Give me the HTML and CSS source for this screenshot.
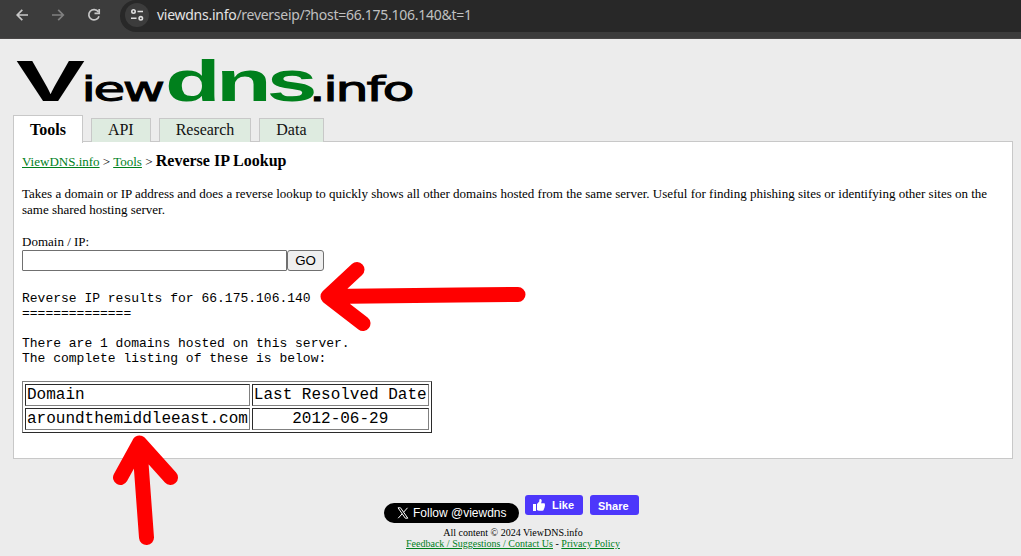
FILE: index.html
```html
<!DOCTYPE html>
<html lang="en">
<head>
<meta charset="utf-8">
<title>Reverse IP Lookup - ViewDNS.info</title>
<link rel="stylesheet" href="styles.css">
</head>
<body>
<header class="toolbar">
  <svg class="nav" width="120" height="32" viewBox="0 0 120 32" fill="none" stroke-width="1.7">
    <path stroke="#c7c7c7" d="M28 15H17.5M22.3 9.8L17.2 15L22.3 20.2"/>
    <path stroke="#808080" d="M52 15H63M58.200 9.800L63.300 15L58.200 20.200"/>
    <path stroke="#c7c7c7" d="M98.300 11.800A5.200 5.200 0 1 0 99 16.200M99.200 9V13.300H94.500"/>
  </svg>
  <div class="address">
    <span class="site-info">
      <svg width="14" height="14" viewBox="0 0 14 14" fill="none" stroke="#dedede" stroke-width="1.6">
        <circle cx="3.500" cy="3.500" r="1.700"/><path d="M7.500 3.500H13M1 10.300H6.500"/><circle cx="10.800" cy="10.300" r="1.700"/>
      </svg>
    </span>
    <span class="url"><b>viewdns.info</b>/reverseip/?host=66.175.106.140&amp;t=1</span>
  </div>
</header>
<main class="page">
  <svg class="logo" width="420" height="60" viewBox="0 0 420 60">
    <text class="v" x="16" y="55" font-size="58" textLength="69" lengthAdjust="spacingAndGlyphs">V</text>
    <text class="thin" transform="translate(81.500 55) scale(1.520 1)" font-size="34" letter-spacing="-1.6">iew</text>
    <text class="dns" transform="translate(165 55) scale(1.600 1)" font-size="57" letter-spacing="-3">dns</text>
    <text class="thin" transform="translate(309 55) scale(1.540 1)" font-size="34" letter-spacing="-1.500">.info</text>
  </svg>
  <nav class="tabs">
    <a class="tab active">Tools</a><a class="tab">API</a><a class="tab">Research</a><a class="tab">Data</a>
  </nav>
  <section class="panel">
    <div class="crumbs"><a href="#">ViewDNS.info</a> &gt; <a href="#">Tools</a> &gt; <strong>Reverse IP Lookup</strong></div>
    <p class="intro">Takes a domain or IP address and does a reverse lookup to quickly shows all other domains hosted from the same server. Useful for finding phishing sites or identifying other sites on the same shared hosting server.</p>
    <form class="lookup">
      <label for="host">Domain / IP:</label>
      <div class="row"><input id="host" type="text"><button type="button">GO</button></div>
    </form>
    <pre class="results">Reverse IP results for 66.175.106.140
==============

There are 1 domains hosted on this server.
The complete listing of these is below:</pre>
    <table class="listing">
      <tr><td>Domain</td><td>Last Resolved Date</td></tr>
      <tr><td>aroundthemiddleeast.com</td><td class="date">2012-06-29</td></tr>
    </table>
  </section>
  <footer class="footer">
    <div class="social">
      <span class="follow">
        <svg width="12" height="12" viewBox="0 0 12 12" fill="none" stroke="#fff"><path d="M1 .8H3.500L10.800 11.200H8.300ZM10.500 .8L6.600 5.200M5.200 6.800L1.200 11.200"/></svg>
        Follow @viewdns
      </span>
      <span class="fb like">
        <svg width="14" height="14" viewBox="0 0 14 14" fill="#fff"><path d="M1 6H4V13H1ZM5 6L7.300 3.500V1.500Q8.700 .2 9.600 2Q9.900 3.200 9 5.200H12Q13.400 5.500 12.800 7Q13.400 8 12.500 9Q12.800 10 11.900 10.800Q12 12.700 10.500 12.700H7Q5.800 12.500 5 11.900Z"/></svg>
        Like
      </span>
      <span class="fb share">Share</span>
    </div>
    <div>All content © 2024 ViewDNS.info</div>
    <div><a href="#">Feedback / Suggestions / Contact Us</a> - <a href="#">Privacy Policy</a></div>
  </footer>
</main>
<svg class="arrows" width="1021" height="556" viewBox="0 0 1021 556" fill="none" stroke="#f00" stroke-width="15" stroke-linecap="round" stroke-linejoin="round">
  <path d="M518 294.500L458 295L328 296.500M357 269.500L328 296.500L363 323.500"/>
  <path d="M146.500 537.500L141 463L139.500 443M120.500 477.500L139.500 443L170.500 477.500"/>
</svg>
</body>
</html>
```

FILE: styles.css
```css
* { box-sizing: border-box; }
body {
  margin: 0;
  height: 556px;
  overflow: hidden;
  position: relative;
  background: #ececec;
  color: #000;
  font: 13px/16px "Liberation Serif", serif;
}
a { color: #00801c; }

.toolbar {
  display: flex;
  height: 39px;
  background: #3c3c3c;
  border-bottom: 1px solid #484646;
}
.nav { flex: none; }
.address {
  flex: 1;
  display: flex;
  height: 32px;
  padding: 3px 0 5px 5px;
  background: #282828;
  border-radius: 16px 0 0 16px;
}
.site-info {
  display: flex;
  align-items: center;
  justify-content: center;
  width: 24px;
  height: 24px;
  border-radius: 50%;
  background: #3c3c3c;
}
.url {
  margin-left: 8px;
  color: #c0c0c0;
  font: 14px/24px "Noto Sans", sans-serif;
  letter-spacing: -.27px;
  white-space: nowrap;
}
.url b { font-weight: 400; color: #e3e3e3; }

.page { padding: 7px 8px 0 13px; }
.logo {
  display: block;
  overflow: visible;
  margin-left: -13px;
  font-family: "DejaVu Sans", sans-serif;
}
.logo .v { font-family: "Liberation Sans", sans-serif; font-weight: 700; }
.logo .thin { stroke: #000; stroke-width: 1; }
.logo .dns {
  fill: #00801c;
  font-family: "Liberation Sans", sans-serif;
  font-weight: 700;
}

.tabs {
  display: flex;
  align-items: flex-end;
  gap: 8px;
  height: 28px;
  margin: 9px 0 -2px;
}
.tab {
  height: 24px;
  padding: 3px 16px 0;
  border: 1px solid #c8c8c8;
  border-bottom-width: 0;
  background: #deebe0;
  color: #111;
  font-size: 16px;
  line-height: 16px;
  margin-bottom: 1px;
}
.tab.active {
  position: relative;
  height: 28px;
  margin-bottom: 0;
  padding-top: 5px;
  line-height: 18px;
  background: #fff;
  color: #000;
  font-weight: 700;
}

.panel {
  height: 318px;
  padding: 10px 8px 0;
  border: 1px solid #c8c8c8;
  background: #fff;
}
.crumbs { height: 18px; line-height: 17px; }
.crumbs strong { font-size: 16px; }
.intro { margin: 16px 0; }
.lookup { margin: 0; }
.lookup label { display: block; }
.row { display: flex; }
.row input {
  width: 265px;
  height: 21px;
  border: 1px solid #707070;
  border-radius: 1px;
  background: #fff;
}
.row button {
  width: 37px;
  height: 21px;
  padding: 0;
  border: 1px solid #707070;
  border-radius: 3px;
  background: #efefef;
  font: 13.33px "Liberation Sans", sans-serif;
}
.results {
  margin: 20px 0 15px;
  font: 13px/15px "Liberation Mono", monospace;
}
.listing {
  border: 1px solid;
  border-color: #808080 #2b2b2b #2b2b2b #808080;
  border-collapse: separate;
  border-spacing: 2px;
  font: 16px/18px "Liberation Mono", monospace;
}
.listing td {
  height: 22px;
  padding: 1px;
  border: 1px solid;
  border-color: #2b2b2b #808080 #808080 #2b2b2b;
}
.listing .date { text-align: center; }

.footer {
  margin-top: 36px;
  font-size: 10px;
  line-height: 11px;
  text-align: center;
}
.social {
  display: flex;
  justify-content: center;
  height: 32px;
  margin-right: 3px;
}
.follow {
  display: flex;
  align-items: center;
  gap: 4px;
  width: 135px;
  height: 20px;
  margin-top: 8px;
  padding-left: 13px;
  border-radius: 10px;
  background: #000;
  color: #fff;
  font: 12px "Liberation Sans", sans-serif;
}
.fb {
  display: flex;
  align-items: center;
  height: 20px;
  border-radius: 3px;
  background: #4d37fb;
  color: #fff;
  font: bold 11px "Liberation Sans", sans-serif;
}
.like { width: 58px; margin-left: 6px; padding-left: 7px; gap: 6px; }
.share { width: 49px; margin-left: 7px; padding: 2px 0 0 8px; }

.arrows { position: absolute; top: 0; left: 0; pointer-events: none; }
```
